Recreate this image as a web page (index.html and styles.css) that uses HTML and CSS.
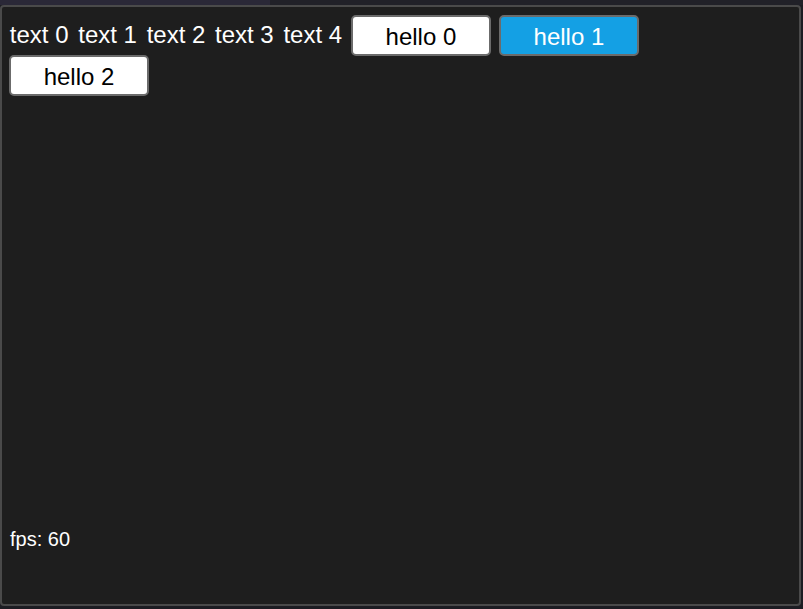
FILE: index.html
```html
<!DOCTYPE html>
<html>
<head>
<meta charset="utf-8">
<link rel="stylesheet" href="styles.css">
</head>
<body>
<div class="topbar"><div class="tab"></div><div class="rest"></div></div>
<div class="panel">
  <div class="flow">
    <span class="label">text 0</span>
    <span class="label">text 1</span>
    <span class="label">text 2</span>
    <span class="label">text 3</span>
    <span class="label">text 4</span>
    <div class="btn">hello 0</div>
    <div class="btn active">hello 1</div>
    <div class="btn">hello 2</div>
  </div>
  <div class="fps">fps: 60</div>
</div>
</body>
</html>
```
FILE: styles.css
```css
html, body {
  margin: 0;
  padding: 0;
}
body {
  width: 803px;
  height: 609px;
  background: #1c1c22;
  font-family: "Liberation Sans", Arial, sans-serif;
  overflow: hidden;
}
.topbar {
  display: flex;
  height: 5px;
}
.tab {
  width: 270px;
  background: #2a2837;
}
.rest {
  flex: 1;
  background: #212128;
}
.panel {
  box-sizing: border-box;
  width: 801px;
  height: 601px;
  border: 2px solid #4a4a4a;
  border-radius: 4px;
  background: #1e1e1e;
  padding: 8px 7px 0 7px;
  display: flex;
  flex-direction: column;
}
.flow {
  display: flex;
  flex-wrap: wrap;
  column-gap: 8px;
  row-gap: 0;
  align-items: flex-start;
  max-width: 700px;
}
.label {
  color: #ffffff;
  font-size: 24px;
  line-height: 40px;
  height: 40px;
  padding: 0 0.85px;
}
.btn {
  box-sizing: border-box;
  width: 140px;
  height: 41px;
  margin-bottom: -1px;
  padding-top: 2px;
  border: 2px solid #6b6b6b;
  border-radius: 5px;
  background: #ffffff;
  color: #000000;
  font-size: 24px;
  display: flex;
  align-items: center;
  justify-content: center;
}
.btn.active {
  background: #14a0e4;
  color: #ffffff;
}
.fps {
  margin-top: auto;
  margin-bottom: 53px;
  color: #ffffff;
  font-size: 20px;
  line-height: 24px;
  padding-left: 1px;
}
```
